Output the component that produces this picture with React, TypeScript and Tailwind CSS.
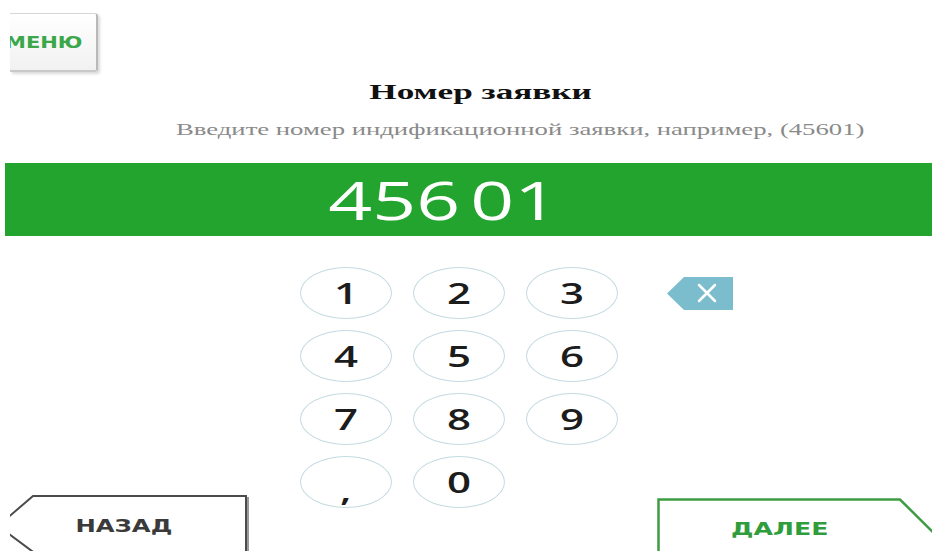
import React from "react";

const KEYS = ["1", "2", "3", "4", "5", "6", "7", "8", "9", ",", "0"];

const KeyButton = ({ label }: { label: string }) => (
  <button className="w-[92px] h-[52px] rounded-[50%] border-[1.5px] border-[#c5dae1] bg-white flex items-center justify-center">
    <span
      className={`inline-block scale-x-[1.5] text-[28px] leading-none font-semibold text-[#1c1c1c] font-['Open_Sans',sans-serif] ${
        label === "," ? "translate-y-[8px]" : ""
      }`}
    >
      {label}
    </span>
  </button>
);

const BackButton = () => (
  <div className="relative w-[240px] h-[64px] flex items-start">
    <svg className="absolute inset-0" width="240" height="64" viewBox="0 0 240 64">
      <polyline
        points="236,64 236,1 23,1 -12,31 30,62"
        fill="none"
        stroke="#4b4b4b"
        strokeWidth="2"
      />
      <line x1="238" y1="2" x2="238" y2="64" stroke="#9a9a9a" strokeWidth="2" />
    </svg>
    <span className="relative ml-[78px] mt-[22px] inline-block scale-x-[1.35] text-[18px] leading-none font-bold text-[#3a3a3a] font-['DejaVu_Sans',sans-serif]">
      НАЗАД
    </span>
  </div>
);

const NextButton = () => (
  <div className="relative w-[275px] h-[60px] flex items-start">
    <svg className="absolute inset-0" width="275" height="60" viewBox="0 0 275 60">
      <polyline
        points="1.5,60 1.5,1.5 243,1.5 290,48"
        fill="none"
        stroke="#3f9c43"
        strokeWidth="2.5"
      />
    </svg>
    <span className="relative ml-[88px] mt-[22px] inline-block scale-x-[1.4] text-[18px] leading-none font-bold text-[#2f9d3c] font-['DejaVu_Sans',sans-serif]">
      ДАЛЕЕ
    </span>
  </div>
);

export default function App() {
  return (
    <div className="w-[932px] h-[551px] bg-white overflow-hidden flex flex-col">
      {/* Menu tab, clipped at the left edge */}
      <div className="shrink-0 mt-[13px] ml-[10px] w-[88px] h-[59px] overflow-hidden bg-gradient-to-b from-white to-[#f1f1f1] border-t border-r-2 border-b-2 border-t-[#d6d6d6] border-r-[#b9b9b9] border-b-[#c9c9c9] rounded-tr-[3px] rounded-br-[3px] shadow-[2px_2px_3px_rgba(0,0,0,0.15)] flex items-center">
        <span className="-ml-[5px] mt-[3px] inline-block origin-left scale-x-[1.4] text-[15px] leading-none font-bold text-[#3aa748] font-['DejaVu_Sans',sans-serif]">
          МЕНЮ
        </span>
      </div>

      {/* Heading */}
      <div className="shrink-0 mt-[9px] flex justify-center pl-[30px]">
        <h1 className="inline-block scale-x-[1.6] text-[22px] leading-none font-bold text-[#111] font-['Liberation_Serif',serif]">
          Номер заявки
        </h1>
      </div>
      <div className="shrink-0 mt-[18px] flex justify-center pl-[108px]">
        <p className="inline-block scale-x-[1.57] text-[17px] leading-none text-[#8a8a8a] font-['Liberation_Serif',serif]">
          Введите номер индификационной заявки, например, (45601)
        </p>
      </div>

      {/* Entered value */}
      <div className="shrink-0 mt-[25px] ml-[5px] h-[73px] bg-[#23a42e] flex items-center justify-center pr-[50px]">
        <div className="inline-flex scale-x-[1.45] gap-[7px] text-[53px] leading-none text-white font-['Open_Sans',sans-serif]">
          <span>456</span>
          <span>01</span>
        </div>
      </div>

      {/* Keypad with navigation */}
      <div className="shrink-0 mt-[31px] flex pl-[10px]">
        <div className="w-[240px] pt-[228px]">
          <BackButton />
        </div>

        <div className="ml-[50px] grid grid-cols-3 gap-x-[21px] gap-y-[11px] content-start">
          {KEYS.map((k) => (
            <KeyButton key={k} label={k} />
          ))}
        </div>

        <div className="ml-[39px] flex flex-col">
          <button className="mt-[10px] ml-[10px] w-[66px] h-[33px]">
            <svg width="66" height="33" viewBox="0 0 66 33">
              <polygon points="0,16.5 17,0 66,0 66,33 17,33" fill="#7bbccd" />
              <path d="M32 8 L48 24 M48 8 L32 24" stroke="#fff" strokeWidth="2.5" strokeLinecap="round" />
            </svg>
          </button>
          <div className="mt-[188px]">
            <NextButton />
          </div>
        </div>
      </div>
    </div>
  );
}
